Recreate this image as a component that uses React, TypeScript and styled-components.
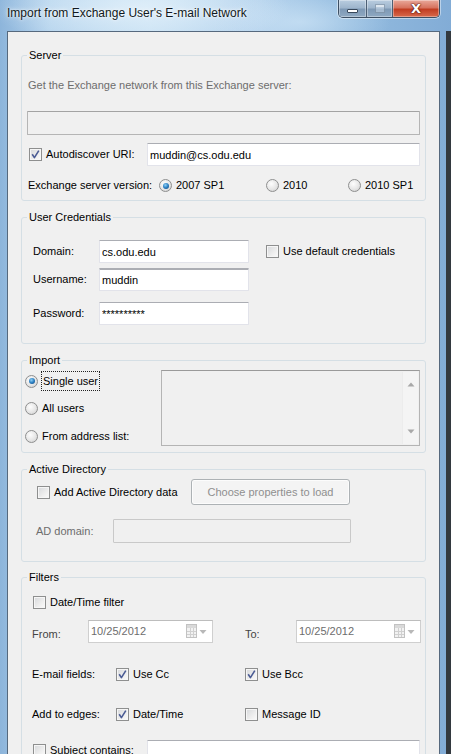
import React from "react";
import styled, { createGlobalStyle } from "styled-components";

const GlobalStyle = createGlobalStyle`
  html, body { margin: 0; padding: 0; }
  body {
    width: 451px; height: 754px; overflow: hidden;
    font-family: "Liberation Sans", Arial, sans-serif; font-size: 11px; color: #000;
  }
  * { box-sizing: border-box; }
`;

const Window = styled.div`
  width: 451px; height: 754px; display: flex; flex-direction: column; overflow: hidden;
  background:
    radial-gradient(ellipse 150px 40px at 140px 8px, rgba(226, 240, 250, 0.85), rgba(226, 240, 250, 0)),
    radial-gradient(ellipse 90px 30px at 300px 22px, rgba(205, 228, 246, 0.7), rgba(205, 228, 246, 0)),
    linear-gradient(90deg, #8db5db 0px, #b4d3ed 50px, #c6e0f3 150px, #b3d1ec 260px, #95bde0 340px, #82acd6 451px);
`;

const TitleBar = styled.div`
  height: 31px; flex: none; display: flex; align-items: flex-start;
  padding: 0 11px 0 7px;
`;

const TitleText = styled.div`
  margin-top: 6px; font-size: 12px; line-height: 15px; color: #101820;
  text-shadow: 0 0 5px rgba(255, 255, 255, 0.95), 0 0 2px rgba(255, 255, 255, 0.9);
`;

const Controls = styled.div`
  margin-left: auto; display: flex; height: 18px;
  border: 1px solid #3d4f63; border-top: none; border-radius: 0 0 5px 5px; overflow: hidden;
  box-shadow: 0 0 0 1px rgba(255, 255, 255, 0.45);
`;

const CtrlBtn = styled.div<{ $w: number; $close?: boolean }>`
  width: ${(p) => p.$w}px; height: 100%; display: flex; align-items: center; justify-content: center;
  & + & { border-left: 1px solid #4c5f74; }
  background: ${(p) =>
    p.$close
      ? "linear-gradient(180deg, #e9a99b 0%, #d7735f 45%, #c13d22 55%, #d86a4c 100%)"
      : "linear-gradient(180deg, #b9cde0 0%, #9fb6cd 45%, #7e99b5 55%, #8fa9c2 100%)"};
  box-shadow: inset 0 0 0 1px rgba(255, 255, 255, 0.35);
`;

const MinGlyph = styled.span`
  width: 11px; height: 4px; margin-top: 5px; background: #fff; border: 1px solid #39495c; border-radius: 1px;
`;

const MaxGlyph = styled.span`
  width: 10px; height: 9px; border: 1px solid rgba(60, 80, 100, 0.35); box-shadow: inset 0 2px 0 rgba(255,255,255,0.5);
  background: rgba(220, 232, 244, 0.4);
`;

const CloseGlyph = styled.span`
  font-family: "DejaVu Sans", sans-serif; font-weight: bold; font-size: 13px; line-height: 13px; color: #fff;
  text-shadow: 0 0 1px #5a1a10, 0 0 1px #5a1a10, 0 0 2px #5a1a10;
`;

const Body = styled.div`
  flex: 1; min-height: 0; display: flex; padding: 0 11px 0 7px;
  background: linear-gradient(to left, #33393f 0 5px, rgba(0, 0, 0, 0) 5px);
`;

const Client = styled.div`
  flex: 1; display: flex; flex-direction: column; overflow: hidden;
  background: #f0f0f0; border: 1px solid #56697e; border-bottom: none;
  padding: 0 13px;
`;

const Group = styled.section<{ $h?: number; $mt: number; $pl?: number }>`
  position: relative; flex: none;
  margin-top: ${(p) => p.$mt}px;
  height: ${(p) => (p.$h ? `${p.$h}px` : "auto")};
  border: 1px solid #d5dfe5; border-radius: 3px;
  padding: 0 5px 0 ${(p) => p.$pl ?? 5}px;
  display: flex; flex-direction: column;
`;

const Legend = styled.span`
  position: absolute; top: -7px; left: 5px; padding: 0 2px;
  background: #f0f0f0; line-height: 13px; font-size: 11px;
`;

const Desc = styled.div`
  margin-top: 23px; padding-left: 1px; line-height: 13px; color: #6d6d6d;
`;

const Field = styled.input<{ $w?: number; $h?: number; $disabled?: boolean }>`
  flex: none; width: ${(p) => (p.$w ? `${p.$w}px` : "100%")}; height: ${(p) => p.$h ?? 23}px;
  margin: 0; padding: 0 2px; outline: none;
  font-family: inherit; font-size: 11px; color: #000;
  background: ${(p) => (p.$disabled ? "#f0f0f0" : "#fff")};
  border: 1px solid ${(p) => (p.$disabled ? "#b5b5b5" : "#e2e3ea")};
  border-top-color: ${(p) => (p.$disabled ? "#a3a3a3" : "#abadb3")};
  border-radius: 1px;
`;

const Row = styled.div<{ $mt: number; $h?: number; $cols?: string }>`
  margin-top: ${(p) => p.$mt}px;
  height: ${(p) => (p.$h ? `${p.$h}px` : "auto")};
  display: ${(p) => (p.$cols ? "grid" : "flex")};
  grid-template-columns: ${(p) => p.$cols ?? "none"};
  align-items: center;
`;

const Cell = styled.div<{ $pl?: number; $pt?: number; $top?: boolean }>`
  display: flex; align-items: center; min-width: 0;
  padding-left: ${(p) => p.$pl ?? 0}px;
  padding-top: ${(p) => p.$pt ?? 0}px;
  align-self: ${(p) => (p.$top ? "flex-start" : "auto")};
`;

const Label = styled.span<{ $muted?: boolean; $dim?: boolean; $ml?: number }>`
  white-space: nowrap; line-height: 13px;
  color: ${(p) => (p.$muted ? "#6d6d6d" : p.$dim ? "#444" : "#000")};
  margin-left: ${(p) => p.$ml ?? 0}px;
`;

const FocusLabel = styled.span`
  margin-left: 3px; padding: 2px 1px 2px 1px; line-height: 14px; border: 1px dotted #222;
`;

const BoxEl = styled.span`
  width: 13px; height: 13px; flex: none; display: inline-flex; align-items: center; justify-content: center;
  border: 1px solid #8e8f8f;
  background: linear-gradient(135deg, #d6d8db 0%, #eeeeee 60%, #fbfbfb 100%);
  box-shadow: inset 0 0 0 1px #f6f6f6;
`;

const RadioEl = styled.span<{ $on?: boolean }>`
  width: 13px; height: 13px; flex: none; border-radius: 50%;
  display: inline-flex; align-items: center; justify-content: center;
  border: 1px solid #8e8f8f;
  background: radial-gradient(circle at 40% 35%, #fdfdfd 0%, #e6e6e6 55%, #c9c9c9 100%);
  &::after {
    content: ""; display: ${(p) => (p.$on ? "block" : "none")};
    width: 6px; height: 6px; border-radius: 50%;
    background: radial-gradient(circle at 40% 35%, #8fd0f5 0%, #2b7fc2 50%, #0e3f73 100%);
  }
`;

const Checkbox: React.FC<{ checked?: boolean }> = ({ checked }) => (
  <BoxEl>
    {checked && (
      <svg width="11" height="11" viewBox="0 0 11 11">
        <path d="M2.2 5.2 L4.4 8.6 L8.8 1.6" fill="none" stroke="#4a5b94" strokeWidth="1.6" strokeLinejoin="round" />
      </svg>
    )}
  </BoxEl>
);

const ListBox = styled.div`
  flex: 1; height: 76px; margin-top: 9px; align-self: flex-start;
  display: flex; justify-content: flex-end;
  border: 1px solid #b4b4b4; border-top-color: #9a9a9a; background: #f0f0f0; padding: 1px;
`;

const ScrollBar = styled.div`
  width: 16px; display: flex; flex-direction: column; justify-content: space-between; align-items: center;
  background: #f4f4f4; border-left: 1px solid #ececec; padding: 10px 0 10px;
`;

const RadioCol = styled.div`
  width: 136px; flex: none; display: flex; flex-direction: column;
`;

const RadioItem = styled.div<{ $mt: number }>`
  margin-top: ${(p) => p.$mt}px; height: 20px; display: flex; align-items: center;
`;

const Button = styled.div`
  width: 159px; height: 26px; flex: none; display: flex; align-items: center; justify-content: center;
  border: 1px solid #adb2b5; border-radius: 3px; background: #f4f4f4; color: #8f8f8f;
  box-shadow: inset 0 0 0 1px #fcfcfc;
`;

const Picker = styled.div`
  width: 125px; height: 23px; flex: none; display: flex; align-items: center;
  border: 1px solid #cfcfcf; border-top-color: #bdbdbd; background: #fff; padding: 0 4px 0 2px;
  color: #6d6d6d;
`;

const PickerText = styled.span`
  flex: 1; line-height: 13px;
`;

const CalIcon: React.FC = () => (
  <svg width="22" height="15" viewBox="0 0 22 15">
    <rect x="0.5" y="0.5" width="10" height="13" fill="#f2f2f2" stroke="#c2c2c2" />
    <rect x="1" y="1" width="9" height="3" fill="#d9d9d9" />
    <g stroke="#d0d0d0" strokeWidth="1">
      <line x1="1" y1="7.5" x2="10" y2="7.5" />
      <line x1="1" y1="10.5" x2="10" y2="10.5" />
      <line x1="4.5" y1="4" x2="4.5" y2="13" />
      <line x1="7.5" y1="4" x2="7.5" y2="13" />
    </g>
    <path d="M13.5 6 L20.5 6 L17 10 Z" fill="#b8b8b8" />
  </svg>
);

const Arrow: React.FC<{ up?: boolean }> = ({ up }) => (
  <svg width="8" height="5" viewBox="0 0 8 5">
    <path d={up ? "M0.5 4.5 L7.5 4.5 L4 0.5 Z" : "M0.5 0.5 L7.5 0.5 L4 4.5 Z"} fill="#a8a8a8" />
  </svg>
);

export default function App() {
  return (
    <>
      <GlobalStyle />
      <Window>
        <TitleBar>
          <TitleText>Import from Exchange User's E-mail Network</TitleText>
          <Controls>
            <CtrlBtn $w={27}><MinGlyph /></CtrlBtn>
            <CtrlBtn $w={26}><MaxGlyph /></CtrlBtn>
            <CtrlBtn $w={47} $close><CloseGlyph>X</CloseGlyph></CtrlBtn>
          </Controls>
        </TitleBar>
        <Body>
          <Client>
            <Group $mt={23} $h={146}>
              <Legend>Server</Legend>
              <Desc>Get the Exchange network from this Exchange server:</Desc>
              <Row $mt={19} $h={24}>
                <Field $h={24} $disabled readOnly value="" />
              </Row>
              <Row $mt={8} $h={23} $cols="120px 1fr">
                <Cell $pl={2}>
                  <Checkbox checked />
                  <Label $ml={4}>Autodiscover URI:</Label>
                </Cell>
                <Field readOnly value="muddin@cs.odu.edu" />
              </Row>
              <Row $mt={13} $h={13} $cols="132px 107px 82px 1fr">
                <Cell $pl={1}><Label>Exchange server version:</Label></Cell>
                <Cell><RadioEl $on /><Label $ml={4}>2007 SP1</Label></Cell>
                <Cell><RadioEl /><Label $ml={4}>2010</Label></Cell>
                <Cell><RadioEl /><Label $ml={4}>2010 SP1</Label></Cell>
              </Row>
            </Group>

            <Group $mt={16} $h={127}>
              <Legend>User Credentials</Legend>
              <Row $mt={22} $h={23} $cols="72px 150px 1fr">
                <Cell $pl={6}><Label>Domain:</Label></Cell>
                <Field readOnly value="cs.odu.edu" />
                <Cell $pl={17}>
                  <Checkbox />
                  <Label $ml={4}>Use default credentials</Label>
                </Cell>
              </Row>
              <Row $mt={5} $h={23} $cols="72px 150px 1fr">
                <Cell $pl={6}><Label>Username:</Label></Cell>
                <Field readOnly value="muddin" style={{ borderTopWidth: 2 }} />
              </Row>
              <Row $mt={11} $h={23} $cols="72px 150px 1fr">
                <Cell $pl={6}><Label>Password:</Label></Cell>
                <Field readOnly value="**********" />
              </Row>
            </Group>

            <Group $mt={16} $h={93} $pl={3}>
              <Legend>Import</Legend>
              <Row $mt={0}>
                <RadioCol>
                  <RadioItem $mt={10}>
                    <RadioEl $on />
                    <FocusLabel>Single user</FocusLabel>
                  </RadioItem>
                  <RadioItem $mt={7}>
                    <RadioEl />
                    <Label $ml={4}>All users</Label>
                  </RadioItem>
                  <RadioItem $mt={8}>
                    <RadioEl />
                    <Label $ml={4}>From address list:</Label>
                  </RadioItem>
                </RadioCol>
                <ListBox>
                  <ScrollBar>
                    <Arrow up />
                    <Arrow />
                  </ScrollBar>
                </ListBox>
              </Row>
            </Group>

            <Group $mt={16} $h={93}>
              <Legend>Active Directory</Legend>
              <Row $mt={9} $h={26} $cols="164px 159px 1fr">
                <Cell $pl={10}>
                  <Checkbox />
                  <Label $ml={4}>Add Active Directory data</Label>
                </Cell>
                <Button>Choose properties to load</Button>
              </Row>
              <Row $mt={14} $h={24} $cols="86px 238px 1fr">
                <Cell $pl={9}><Label $muted>AD domain:</Label></Cell>
                <Field $h={24} $disabled readOnly value="" style={{ borderColor: "#c9c9c9" }} />
              </Row>
            </Group>

            <Group $mt={15}>
              <Legend>Filters</Legend>
              <Row $mt={18} $h={13}>
                <Cell $pl={6}>
                  <Checkbox />
                  <Label $ml={4}>Date/Time filter</Label>
                </Cell>
              </Row>
              <Row $mt={11} $h={23} $cols="61px 125px 32px 51px 125px">
                <Cell $pl={5} $pt={5}><Label $dim>From:</Label></Cell>
                <Picker><PickerText>10/25/2012</PickerText><CalIcon /></Picker>
                <span />
                <Cell $pt={5}><Label $dim>To:</Label></Cell>
                <Picker><PickerText>10/25/2012</PickerText><CalIcon /></Picker>
              </Row>
              <Row $mt={24} $h={15} $cols="89px 129px 1fr">
                <Cell $pl={5}><Label>E-mail fields:</Label></Cell>
                <Cell><Checkbox checked /><Label $ml={4}>Use Cc</Label></Cell>
                <Cell><Checkbox checked /><Label $ml={4}>Use Bcc</Label></Cell>
              </Row>
              <Row $mt={25} $h={15} $cols="89px 129px 1fr">
                <Cell $pl={5}><Label>Add to edges:</Label></Cell>
                <Cell><Checkbox checked /><Label $ml={4}>Date/Time</Label></Cell>
                <Cell><Checkbox /><Label $ml={4}>Message ID</Label></Cell>
              </Row>
              <Row $mt={18} $h={23} $cols="120px 1fr">
                <Cell $pl={6} $pt={4} $top>
                  <Checkbox />
                  <Label $ml={4}>Subject contains:</Label>
                </Cell>
                <Field readOnly value="" />
              </Row>
              <Row $mt={20} $h={20} />
            </Group>
          </Client>
        </Body>
      </Window>
    </>
  );
}
